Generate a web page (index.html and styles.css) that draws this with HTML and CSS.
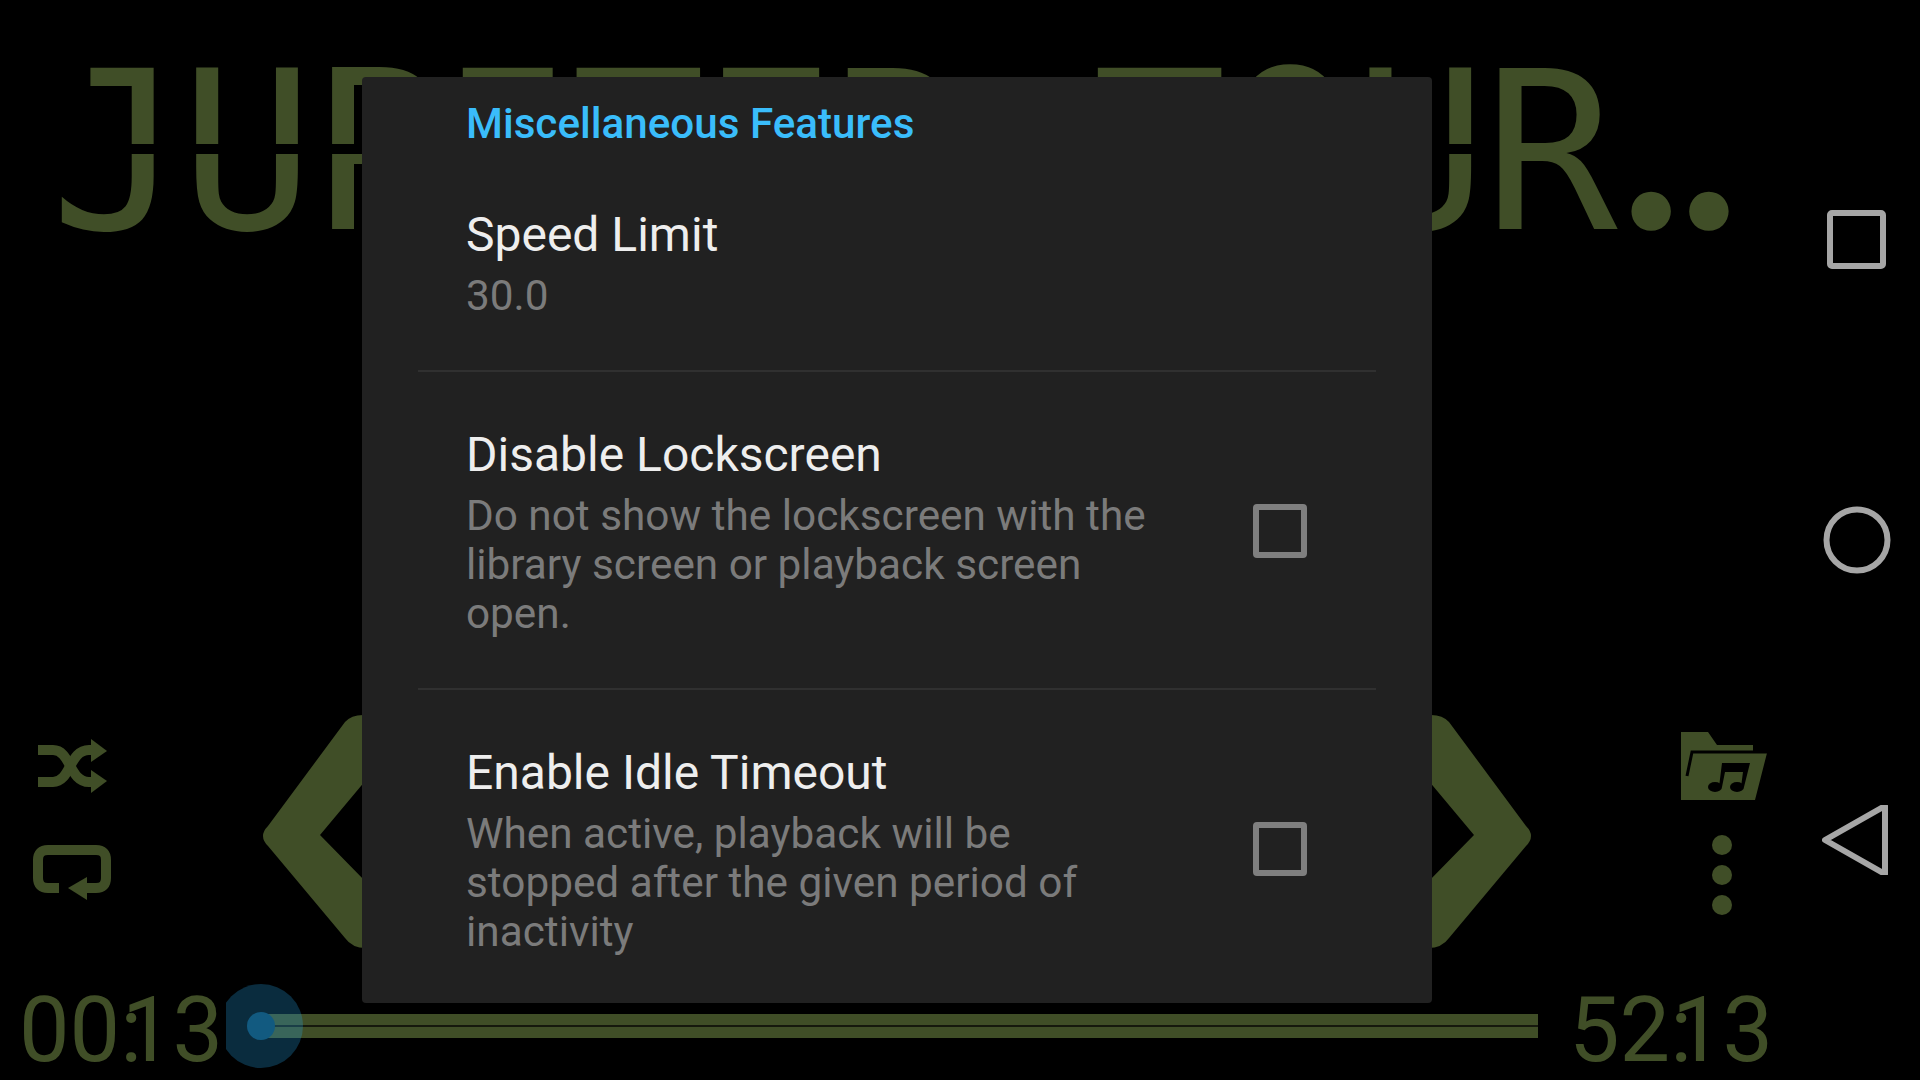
FILE: index.html
```html
<!DOCTYPE html>
<html lang="en">
<head>
<meta charset="UTF-8">
<meta name="viewport" content="width=device-width, initial-scale=1.0">
<title>Miscellaneous Features</title>
<link rel="stylesheet" href="styles.css">
</head>
<body>
<div class="screen">
    <main class="player">
        <div class="track-title"><span class="track-segmented">JUPITER TOU</span>R<span class="track-dots">..</span></div>

        <div class="controls">
            <div class="mode-buttons">
                <svg class="icon-shuffle" width="69" height="54" viewBox="0 0 69 54">
                    <path class="icon-line" d="M0 11H15C33 11 31 43 51 43H55"/>
                    <path class="icon-line" d="M0 43H15C33 43 31 11 51 11H55"/>
                    <polygon class="icon-fill" points="53,0 69,12 53,23"/>
                    <polygon class="icon-fill" points="53,31 69,42 53,54"/>
                </svg>
                <svg class="icon-repeat" width="78" height="55" viewBox="0 0 78 55">
                    <path class="icon-line" d="M26 43H15Q5 43 5 33V15Q5 5 15 5H63Q73 5 73 15V33Q73 43 63 43H52"/>
                    <polygon class="icon-fill" points="35,43 54,32 54,55"/>
                </svg>
            </div>
            <svg class="chevron" width="120" height="238" viewBox="0 0 120 238">
                <path class="icon-fill" d="M85 10Q92 2 106 3V68L60 123L106 170V236Q92 236 85 226L8 134Q-2 124 8 114Z"/>
            </svg>
            <svg class="chevron chevron-next" width="120" height="238" viewBox="0 0 120 238">
                <path class="icon-fill" d="M85 10Q92 2 106 3V68L60 123L106 170V236Q92 236 85 226L8 134Q-2 124 8 114Z"/>
            </svg>
            <div class="menu-buttons">
                <svg class="icon-folder" width="86" height="68" viewBox="0 0 86 68">
                    <path class="icon-fill" d="M0 0H27L36 13H72V21H86L74 68H0Z"/>
                    <path class="icon-cut" d="M6 44L11 20H86"/>
                    <ellipse class="icon-black" cx="34" cy="55" rx="7" ry="5"/>
                    <ellipse class="icon-black" cx="56" cy="55" rx="7" ry="5"/>
                    <polygon class="icon-black" points="38,55 41,31 69,31 63,55 60,55 62,40 44,40 41,55"/>
                </svg>
                <div class="overflow-dots">
                    <span class="overflow-dot"></span>
                    <span class="overflow-dot"></span>
                    <span class="overflow-dot"></span>
                </div>
            </div>
        </div>

        <div class="seek-row">
            <span class="time time-current">00<span class="time-colon">:</span>13</span>
            <div class="seek-bar">
                <span class="seek-thumb"></span>
            </div>
            <span class="time">52<span class="time-colon">:</span>13</span>
        </div>
    </main>

    <nav class="nav-bar">
        <svg width="70" height="70" viewBox="0 0 70 70">
            <rect class="nav-icon" x="8" y="8" width="53" height="53" rx="2"/>
        </svg>
        <svg width="70" height="70" viewBox="0 0 70 70">
            <circle class="nav-icon" cx="35" cy="35" r="30.5"/>
        </svg>
        <svg width="70" height="70" viewBox="0 0 70 70">
            <polygon class="nav-icon" points="3,35 63,1 63,69"/>
        </svg>
    </nav>

    <section class="dialog">
        <h2 class="dialog-header">Miscellaneous Features</h2>

        <div class="pref">
            <div class="pref-text">
                <div class="pref-title">Speed Limit</div>
                <div class="pref-summary">30.0</div>
            </div>
        </div>

        <div class="pref">
            <div class="pref-text">
                <div class="pref-title">Disable Lockscreen</div>
                <div class="pref-summary">Do not show the lockscreen with the library screen or playback screen open.</div>
            </div>
            <span class="pref-check"></span>
        </div>

        <div class="pref">
            <div class="pref-text">
                <div class="pref-title">Enable Idle Timeout</div>
                <div class="pref-summary">When active, playback will be stopped after the given period of inactivity</div>
            </div>
            <span class="pref-check"></span>
        </div>
    </section>
</div>
</body>
</html>
```

FILE: styles.css
```css
* {
    box-sizing: border-box;
}

body {
    margin: 0;
    background-color: #000;
    font-family: Roboto, "Noto Sans", sans-serif;
}

.screen {
    position: relative;
    display: flex;
    width: 1920px;
    height: 1080px;
    overflow: hidden;
}

.player {
    flex: 1;
    display: flex;
    flex-direction: column;
    min-width: 0;
}

.track-title {
    margin-top: 8px;
    padding-left: 50px;
    height: 218px;
    font-family: "DejaVu Sans Mono", monospace;
    font-size: 222px;
    line-height: 240px;
    letter-spacing: -3.3px;
    color: #404e27;
    white-space: nowrap;
}

/* the lcd look: a gap across the middle of the letters */
.track-segmented {
    display: inline-block;
    -webkit-mask-image: linear-gradient(#000 112px, transparent 112px, transparent 122px, #000 122px);
    mask-image: linear-gradient(#000 112px, transparent 112px, transparent 122px, #000 122px);
}

.track-dots {
    margin-left: 6px;
    font-family: Lato, sans-serif;
    font-size: 260px;
    font-weight: 700;
    letter-spacing: -4px;
}

.controls {
    display: flex;
    align-items: flex-start;
    margin-top: auto;
    margin-bottom: 31px;
    padding: 0 23px 0 33px;
}

.mode-buttons {
    display: flex;
    flex-direction: column;
    align-items: center;
    gap: 52px;
    width: 78px;
    padding-top: 27px;
}

.chevron {
    margin-left: 149px;
}

.chevron-next {
    margin-left: auto;
    transform: scaleX(-1);
}

.menu-buttons {
    display: flex;
    flex-direction: column;
    align-items: center;
    margin-left: 147px;
    padding-top: 20px;
}

.overflow-dots {
    display: flex;
    flex-direction: column;
    gap: 10px;
    margin: 35px 5px 0 0;
}

.overflow-dot {
    width: 20px;
    height: 20px;
    border-radius: 50%;
    background-color: #404e27;
}

.icon-fill {
    fill: #404e27;
}

.icon-line {
    fill: none;
    stroke: #404e27;
    stroke-width: 10;
}

.icon-cut {
    fill: none;
    stroke: #000;
    stroke-width: 3;
}

.icon-black {
    fill: #000;
}

.seek-row {
    display: flex;
    align-items: center;
    height: 90px;
    margin-bottom: 9px;
    padding-left: 19px;
}

.time {
    padding-top: 10px;
    font-size: 90px;
    line-height: 80px;
    color: #404e27;
    white-space: nowrap;
}

.time-colon {
    letter-spacing: -20px;
}

/* sits on top so the thumb's halo is cut off at the edge of the time */
.time-current {
    position: relative;
    z-index: 1;
    width: 207px;
    background-color: #000;
}

.seek-bar {
    position: relative;
    flex: none;
    width: 1276px;
    height: 24px;
    margin: 0 31px 0 36px;
    background: linear-gradient(#404e27 11px, #16190d 11px, #16190d 13px, #404e27 13px);
}

.seek-thumb {
    position: absolute;
    left: -43px;
    top: -30px;
    width: 84px;
    height: 84px;
    border-radius: 50%;
    background-color: rgba(40, 170, 240, 0.26);
}

.seek-thumb::after {
    content: "";
    position: absolute;
    left: 28px;
    top: 28px;
    width: 28px;
    height: 28px;
    border-radius: 50%;
    background-color: #125a80;
}

.nav-bar {
    display: flex;
    flex-direction: column;
    align-items: center;
    justify-content: center;
    gap: 230px;
    width: 130px;
    padding-left: 4px;
}

.nav-icon {
    fill: none;
    stroke: #a6a6a6;
    stroke-width: 6;
    stroke-linejoin: round;
}

.dialog {
    position: absolute;
    left: 362px;
    top: 77px;
    width: 1070px;
    height: 926px;
    padding: 22px 56px 0;
    overflow: hidden;
    border-radius: 4px;
    background-color: #212121;
}

.dialog-header {
    margin: 0 0 4px 48px;
    font-size: 42.2px;
    font-weight: 500;
    line-height: 49px;
    color: #3abdfb;
}

.pref {
    display: flex;
    align-items: center;
    padding: 54px 69px 50px 48px;
    border-bottom: 2px solid #303030;
}

.pref:last-child {
    border-bottom: none;
}

.pref-text {
    width: 690px;
}

.pref-title {
    font-size: 48px;
    line-height: 58px;
    color: #eeeeee;
}

.pref-summary {
    margin-top: 7px;
    font-size: 42.3px;
    line-height: 49px;
    color: #7b7b7b;
}

.pref-check {
    width: 54px;
    height: 54px;
    margin: -3px 0 0 auto;
    border: 6px solid #7f7f7f;
    border-radius: 4px;
}
```
